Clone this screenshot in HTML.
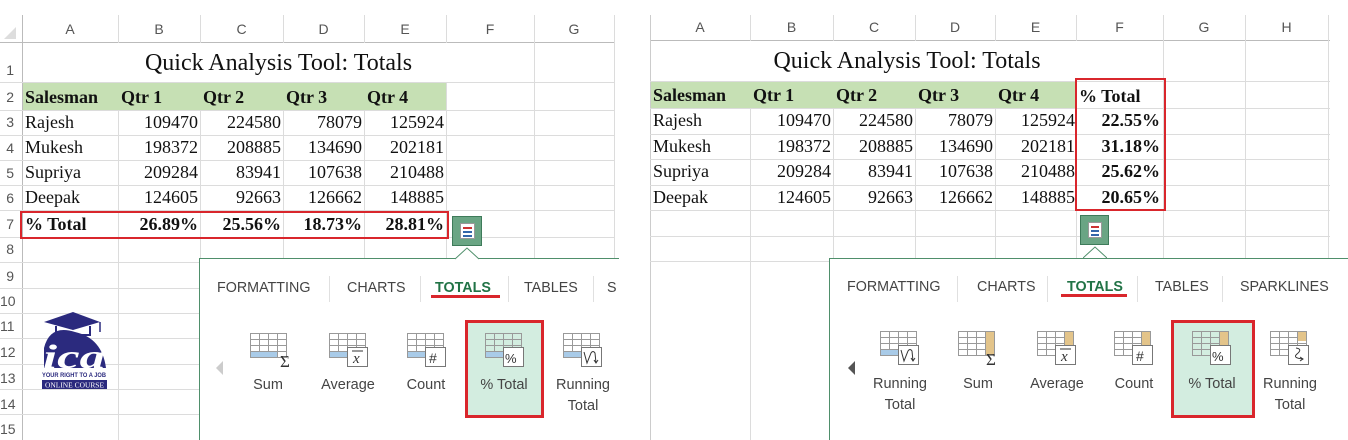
<!DOCTYPE html>
<html><head><meta charset="utf-8"><style>
*{margin:0;padding:0;box-sizing:border-box}
body{width:1348px;height:440px;background:#fff;position:relative;overflow:hidden;font-family:"Liberation Serif",serif}
.a{position:absolute}
.v{position:absolute;width:1px;background:#dcdcdc}
.h{position:absolute;height:1px;background:#dcdcdc}
.ch{position:absolute;font-family:"Liberation Sans",sans-serif;font-size:14px;color:#555;text-align:center;top:21px}
.rn{position:absolute;left:0;width:14px;font-family:"Liberation Sans",sans-serif;font-size:14px;color:#555;text-align:right}
.c{position:absolute;font-size:18px;color:#111;height:25px;line-height:25px;white-space:nowrap}
.r{text-align:right}
.b{font-weight:bold}
.tab{position:absolute;font-family:"Liberation Sans",sans-serif;font-size:14.3px;color:#444;top:280px}
.sep{position:absolute;width:1px;background:#e0e0e0;top:276px;height:26px}
.lbl{position:absolute;font-family:"Liberation Sans",sans-serif;font-size:14.5px;color:#444;text-align:center;width:80px;line-height:21px}
</style></head><body>

<!-- LEFT PANEL grid -->
<div class="h" style="left:0;top:42px;width:615px;background:#bbb"></div>
<div class="v" style="left:22px;top:15px;height:425px;background:#bbb"></div>
<div class="v" style="left:118px;top:15px;height:425px"></div>
<div class="v" style="left:200px;top:15px;height:425px"></div>
<div class="v" style="left:283px;top:15px;height:425px"></div>
<div class="v" style="left:364px;top:15px;height:425px"></div>
<div class="v" style="left:446px;top:15px;height:425px"></div>
<div class="v" style="left:534px;top:15px;height:425px"></div>
<div class="v" style="left:614px;top:15px;height:425px"></div>
<div class="h" style="left:0;top:82px;width:615px"></div>
<div class="h" style="left:0;top:110px;width:615px"></div>
<div class="h" style="left:0;top:135px;width:615px"></div>
<div class="h" style="left:0;top:160px;width:615px"></div>
<div class="h" style="left:0;top:185px;width:615px"></div>
<div class="h" style="left:0;top:210px;width:615px"></div>
<div class="h" style="left:0;top:237px;width:615px"></div>
<div class="h" style="left:0;top:262px;width:615px"></div>
<div class="h" style="left:0;top:288px;width:615px"></div>
<div class="h" style="left:0;top:313px;width:615px"></div>
<div class="h" style="left:0;top:338px;width:615px"></div>
<div class="h" style="left:0;top:364px;width:615px"></div>
<div class="h" style="left:0;top:389px;width:615px"></div>
<div class="h" style="left:0;top:414px;width:615px"></div>
<div class="a" style="left:4px;top:27px;width:0;height:0;border-left:12px solid transparent;border-bottom:12px solid #ddd"></div>
<div class="ch" style="left:22px;width:96px">A</div>
<div class="ch" style="left:118px;width:82px">B</div>
<div class="ch" style="left:200px;width:83px">C</div>
<div class="ch" style="left:283px;width:81px">D</div>
<div class="ch" style="left:364px;width:82px">E</div>
<div class="ch" style="left:446px;width:88px">F</div>
<div class="ch" style="left:534px;width:80px">G</div>
<div class="rn" style="top:62px">1</div>
<div class="rn" style="top:89px">2</div>
<div class="rn" style="top:114px">3</div>
<div class="rn" style="top:140px">4</div>
<div class="rn" style="top:165px">5</div>
<div class="rn" style="top:190px">6</div>
<div class="rn" style="top:216px">7</div>
<div class="rn" style="top:241px">8</div>
<div class="rn" style="top:268px">9</div>
<div class="rn" style="top:293px">10</div>
<div class="rn" style="top:318px">11</div>
<div class="rn" style="top:344px">12</div>
<div class="rn" style="top:370px">13</div>
<div class="rn" style="top:396px">14</div>
<div class="rn" style="top:421px">15</div>

<div class="a" style="left:23px;top:43px;width:511px;height:39px;background:#fff"></div>
<div class="c" style="left:23px;top:49px;width:511px;text-align:center;font-size:24px;height:28px;line-height:28px">Quick Analysis Tool: Totals</div>
<div class="a" style="left:23px;top:83px;width:423px;height:27px;background:#c6e0b4"></div>
<div class="c b" style="left:25px;top:85px">Salesman</div>
<div class="c b" style="left:121px;top:85px">Qtr 1</div>
<div class="c b" style="left:203px;top:85px">Qtr 2</div>
<div class="c b" style="left:286px;top:85px">Qtr 3</div>
<div class="c b" style="left:367px;top:85px">Qtr 4</div>

<div class="c" style="left:25px;top:110px">Rajesh</div>
<div class="c r" style="left:118px;width:80px;top:110px">109470</div>
<div class="c r" style="left:200px;width:81px;top:110px">224580</div>
<div class="c r" style="left:283px;width:79px;top:110px">78079</div>
<div class="c r" style="left:364px;width:80px;top:110px">125924</div>
<div class="c" style="left:25px;top:135px">Mukesh</div>
<div class="c r" style="left:118px;width:80px;top:135px">198372</div>
<div class="c r" style="left:200px;width:81px;top:135px">208885</div>
<div class="c r" style="left:283px;width:79px;top:135px">134690</div>
<div class="c r" style="left:364px;width:80px;top:135px">202181</div>
<div class="c" style="left:25px;top:160px">Supriya</div>
<div class="c r" style="left:118px;width:80px;top:160px">209284</div>
<div class="c r" style="left:200px;width:81px;top:160px">83941</div>
<div class="c r" style="left:283px;width:79px;top:160px">107638</div>
<div class="c r" style="left:364px;width:80px;top:160px">210488</div>
<div class="c" style="left:25px;top:185px">Deepak</div>
<div class="c r" style="left:118px;width:80px;top:185px">124605</div>
<div class="c r" style="left:200px;width:81px;top:185px">92663</div>
<div class="c r" style="left:283px;width:79px;top:185px">126662</div>
<div class="c r" style="left:364px;width:80px;top:185px">148885</div>
<div class="c b" style="left:25px;top:212px">% Total</div>
<div class="c b r" style="left:118px;width:80px;top:212px">26.89%</div>
<div class="c b r" style="left:200px;width:81px;top:212px">25.56%</div>
<div class="c b r" style="left:283px;width:79px;top:212px">18.73%</div>
<div class="c b r" style="left:364px;width:80px;top:212px">28.81%</div>
<div class="a" style="left:20px;top:211px;width:429px;height:28px;border:2px solid #d9262c"></div>

<!-- left QA button -->
<div class="a" style="left:452px;top:216px;width:30px;height:30px;background:#6aa584;border:1px solid #3e7b5a"></div>
<div class="a" style="left:460px;top:223px;width:15px;height:16px;background:#fff;border:1px solid #999"></div>
<div class="a" style="left:463px;top:227px;width:9px;height:2px;background:#c33"></div>
<div class="a" style="left:463px;top:231px;width:9px;height:2px;background:#36a"></div>
<div class="a" style="left:463px;top:235px;width:9px;height:2px;background:#36a"></div>

<!-- left popup -->
<div class="a" style="left:199px;top:258px;width:420px;height:182px;background:#fff;border-left:1px solid #4f8f6b;border-top:1px solid #4f8f6b"></div>
<svg class="a" style="left:455px;top:247px" width="24" height="13"><path d="M0 12 L12 1 L24 12" fill="#fff" stroke="#4f8f6b"/></svg>
<div class="tab" style="left:217px">FORMATTING</div>
<div class="sep" style="left:329px"></div>
<div class="tab" style="left:347px">CHARTS</div>
<div class="sep" style="left:420px"></div>
<div class="tab" style="left:435px;color:#217346;font-weight:bold">TOTALS</div>
<div class="a" style="left:431px;top:295px;width:69px;height:3px;background:#d9262c"></div>
<div class="sep" style="left:508px"></div>
<div class="tab" style="left:524px">TABLES</div>
<div class="sep" style="left:593px"></div>
<div class="tab" style="left:607px">S</div>
<svg class="a" style="left:216px;top:361px" width="8" height="14"><path d="M7 0 L0 7 L7 14Z" fill="#ccc"/></svg>
<div class="a" style="left:465px;top:320px;width:79px;height:98px;background:#d3ede0;border:3px solid #d9262c"></div>

<svg class="a" style="left:250px;top:333px" width="40" height="36"><g fill="none" stroke="#999" stroke-width="1"><rect x="0.5" y="0.5" width="36" height="24"/><path d="M0.5 6.5H36.5M0.5 12.5H36.5M0.5 18.5H36.5M9.5 0.5V24.5M18.5 0.5V24.5M27.5 0.5V24.5"/></g><rect x="1" y="19" width="26" height="5" fill="#a9cbe8"/><text x="30" y="34" font-family="Liberation Serif" font-size="17" fill="#333">Σ</text></svg>
<svg class="a" style="left:329px;top:333px" width="40" height="36"><g fill="none" stroke="#999"><rect x="0.5" y="0.5" width="36" height="24"/><path d="M0.5 6.5H36.5M0.5 12.5H36.5M0.5 18.5H36.5M9.5 0.5V24.5M18.5 0.5V24.5M27.5 0.5V24.5"/></g><rect x="1" y="19" width="17" height="5" fill="#a9cbe8"/><rect x="18.5" y="14.5" width="20" height="19" fill="#fff" stroke="#777"/><text x="24" y="30" font-family="Liberation Serif" font-style="italic" font-size="15" fill="#333">x</text><path d="M23 18H34" stroke="#333"/></svg>
<svg class="a" style="left:407px;top:333px" width="40" height="36"><g fill="none" stroke="#999"><rect x="0.5" y="0.5" width="36" height="24"/><path d="M0.5 6.5H36.5M0.5 12.5H36.5M0.5 18.5H36.5M9.5 0.5V24.5M18.5 0.5V24.5M27.5 0.5V24.5"/></g><rect x="1" y="19" width="17" height="5" fill="#a9cbe8"/><rect x="18.5" y="14.5" width="20" height="19" fill="#fff" stroke="#777"/><text x="22" y="30" font-family="Liberation Sans" font-size="14" fill="#333">#</text></svg>
<svg class="a" style="left:485px;top:333px" width="40" height="36"><g fill="none" stroke="#999"><rect x="0.5" y="0.5" width="36" height="24"/><path d="M0.5 6.5H36.5M0.5 12.5H36.5M0.5 18.5H36.5M9.5 0.5V24.5M18.5 0.5V24.5M27.5 0.5V24.5"/></g><rect x="1" y="19" width="17" height="5" fill="#a9cbe8"/><rect x="18.5" y="14.5" width="20" height="19" fill="#fff" stroke="#777"/><text x="20" y="30" font-family="Liberation Sans" font-size="13" fill="#333">%</text></svg>
<svg class="a" style="left:563px;top:333px" width="40" height="36"><g fill="none" stroke="#999"><rect x="0.5" y="0.5" width="36" height="24"/><path d="M0.5 6.5H36.5M0.5 12.5H36.5M0.5 18.5H36.5M9.5 0.5V24.5M18.5 0.5V24.5M27.5 0.5V24.5"/></g><rect x="1" y="19" width="17" height="5" fill="#a9cbe8"/><rect x="18.5" y="14.5" width="20" height="19" fill="#fff" stroke="#777"/><path d="M21 19 L24 30 L28 20 Q30 17 32 20 L33 30 M31 27 L33 30 L35 27" fill="none" stroke="#333"/></svg>
<div class="lbl" style="left:228px;top:375px">Sum</div>
<div class="lbl" style="left:308px;top:375px">Average</div>
<div class="lbl" style="left:386px;top:375px">Count</div>
<div class="lbl" style="left:464px;top:375px">% Total</div>
<div class="lbl" style="left:543px;top:375px">Running<br>Total</div>

<!-- ICA logo -->
<svg class="a" style="left:40px;top:310px" width="72" height="80">
<path d="M4 12 L33 2 L60 12 L33 20Z" fill="#2b2a7e"/>
<path d="M16 16 V25 H50 V16" fill="none" stroke="#2b2a7e" stroke-width="2"/>
<path d="M60 12 V22" stroke="#2b2a7e" stroke-width="1.5"/>
<path d="M4 58 V38 Q10 14 35 22 Q62 28 66 58Z" fill="#2b2a7e"/>
<text x="3" y="58" font-family="Liberation Serif" font-style="italic" font-weight="bold" font-size="34" fill="#fff" textLength="62" lengthAdjust="spacingAndGlyphs">ica</text>
<text x="2" y="67" font-family="Liberation Sans" font-weight="bold" font-size="6.5" fill="#2b2a7e" textLength="64" lengthAdjust="spacingAndGlyphs">YOUR RIGHT TO A JOB</text>
<rect x="2" y="70" width="65" height="9" fill="#2b2a7e"/>
<text x="5" y="77.5" font-family="Liberation Serif" font-size="7" fill="#fff" textLength="59" lengthAdjust="spacingAndGlyphs">ONLINE COURSE</text>
</svg>

<!-- RIGHT PANEL grid -->
<div class="h" style="left:650px;top:40px;width:680px;background:#bbb"></div>
<div class="v" style="left:650px;top:15px;height:425px;background:#ccc"></div>
<div class="v" style="left:750px;top:15px;height:425px"></div>
<div class="v" style="left:833px;top:15px;height:425px"></div>
<div class="v" style="left:915px;top:15px;height:425px"></div>
<div class="v" style="left:995px;top:15px;height:425px"></div>
<div class="v" style="left:1076px;top:15px;height:425px"></div>
<div class="v" style="left:1163px;top:15px;height:425px"></div>
<div class="v" style="left:1245px;top:15px;height:425px"></div>
<div class="v" style="left:1328px;top:15px;height:425px"></div>
<div class="h" style="left:650px;top:81px;width:680px"></div>
<div class="h" style="left:650px;top:108px;width:680px"></div>
<div class="h" style="left:650px;top:134px;width:680px"></div>
<div class="h" style="left:650px;top:159px;width:680px"></div>
<div class="h" style="left:650px;top:185px;width:680px"></div>
<div class="h" style="left:650px;top:210px;width:680px"></div>
<div class="h" style="left:650px;top:236px;width:680px"></div>
<div class="h" style="left:650px;top:261px;width:680px"></div>
<div class="ch" style="left:650px;width:100px;top:19px">A</div>
<div class="ch" style="left:750px;width:83px;top:19px">B</div>
<div class="ch" style="left:833px;width:82px;top:19px">C</div>
<div class="ch" style="left:915px;width:80px;top:19px">D</div>
<div class="ch" style="left:995px;width:81px;top:19px">E</div>
<div class="ch" style="left:1076px;width:87px;top:19px">F</div>
<div class="ch" style="left:1163px;width:82px;top:19px">G</div>
<div class="ch" style="left:1245px;width:83px;top:19px">H</div>

<div class="a" style="left:651px;top:41px;width:512px;height:40px;background:#fff"></div>
<div class="c" style="left:651px;top:47px;width:512px;text-align:center;font-size:24px;height:28px;line-height:28px">Quick Analysis Tool: Totals</div>
<div class="a" style="left:651px;top:82px;width:425px;height:26px;background:#c6e0b4"></div>
<div class="c b" style="left:653px;top:83px">Salesman</div>
<div class="c b" style="left:753px;top:83px">Qtr 1</div>
<div class="c b" style="left:836px;top:83px">Qtr 2</div>
<div class="c b" style="left:918px;top:83px">Qtr 3</div>
<div class="c b" style="left:998px;top:83px">Qtr 4</div>
<div class="c b" style="left:1079px;top:84px">% Total</div>

<div class="c" style="left:653px;top:108px">Rajesh</div>
<div class="c r" style="left:750px;width:81px;top:108px">109470</div>
<div class="c r" style="left:833px;width:80px;top:108px">224580</div>
<div class="c r" style="left:915px;width:78px;top:108px">78079</div>
<div class="c r" style="left:995px;width:80px;top:108px">125924</div>
<div class="c b r" style="left:1076px;width:84px;top:108px">22.55%</div>
<div class="c" style="left:653px;top:134px">Mukesh</div>
<div class="c r" style="left:750px;width:81px;top:134px">198372</div>
<div class="c r" style="left:833px;width:80px;top:134px">208885</div>
<div class="c r" style="left:915px;width:78px;top:134px">134690</div>
<div class="c r" style="left:995px;width:80px;top:134px">202181</div>
<div class="c b r" style="left:1076px;width:84px;top:134px">31.18%</div>
<div class="c" style="left:653px;top:159px">Supriya</div>
<div class="c r" style="left:750px;width:81px;top:159px">209284</div>
<div class="c r" style="left:833px;width:80px;top:159px">83941</div>
<div class="c r" style="left:915px;width:78px;top:159px">107638</div>
<div class="c r" style="left:995px;width:80px;top:159px">210488</div>
<div class="c b r" style="left:1076px;width:84px;top:159px">25.62%</div>
<div class="c" style="left:653px;top:185px">Deepak</div>
<div class="c r" style="left:750px;width:81px;top:185px">124605</div>
<div class="c r" style="left:833px;width:80px;top:185px">92663</div>
<div class="c r" style="left:915px;width:78px;top:185px">126662</div>
<div class="c r" style="left:995px;width:80px;top:185px">148885</div>
<div class="c b r" style="left:1076px;width:84px;top:185px">20.65%</div>
<div class="a" style="left:1075px;top:78px;width:91px;height:133px;border:2px solid #d9262c"></div>

<!-- right QA button -->
<div class="a" style="left:1080px;top:215px;width:29px;height:30px;background:#6aa584;border:1px solid #3e7b5a"></div>
<div class="a" style="left:1088px;top:222px;width:14px;height:16px;background:#fff;border:1px solid #999"></div>
<div class="a" style="left:1091px;top:226px;width:8px;height:2px;background:#c33"></div>
<div class="a" style="left:1091px;top:230px;width:8px;height:2px;background:#36a"></div>
<div class="a" style="left:1091px;top:234px;width:8px;height:2px;background:#36a"></div>

<!-- right popup -->
<div class="a" style="left:829px;top:258px;width:519px;height:182px;background:#fff;border-left:1px solid #4f8f6b;border-top:1px solid #4f8f6b"></div>
<svg class="a" style="left:1083px;top:246px" width="24" height="13"><path d="M0 12 L12 1 L24 12" fill="#fff" stroke="#4f8f6b"/></svg>
<div class="tab" style="left:847px;top:279px">FORMATTING</div>
<div class="sep" style="left:957px"></div>
<div class="tab" style="left:977px;top:279px">CHARTS</div>
<div class="sep" style="left:1047px"></div>
<div class="tab" style="left:1067px;top:279px;color:#217346;font-weight:bold">TOTALS</div>
<div class="a" style="left:1061px;top:294px;width:66px;height:3px;background:#d9262c"></div>
<div class="sep" style="left:1137px"></div>
<div class="tab" style="left:1155px;top:279px">TABLES</div>
<div class="sep" style="left:1222px"></div>
<div class="tab" style="left:1240px;top:279px">SPARKLINES</div>
<svg class="a" style="left:848px;top:361px" width="8" height="14"><path d="M7 0 L0 7 L7 14Z" fill="#555"/></svg>
<div class="a" style="left:1171px;top:320px;width:84px;height:98px;background:#d3ede0;border:3px solid #d9262c"></div>

<svg class="a" style="left:880px;top:331px" width="40" height="36"><g fill="none" stroke="#999"><rect x="0.5" y="0.5" width="36" height="24"/><path d="M0.5 6.5H36.5M0.5 12.5H36.5M0.5 18.5H36.5M9.5 0.5V24.5M18.5 0.5V24.5M27.5 0.5V24.5"/></g><rect x="1" y="19" width="17" height="5" fill="#a9cbe8"/><rect x="18.5" y="14.5" width="20" height="19" fill="#fff" stroke="#777"/><path d="M21 19 L24 30 L28 20 Q30 17 32 20 L33 30 M31 27 L33 30 L35 27" fill="none" stroke="#333"/></svg>
<svg class="a" style="left:958px;top:331px" width="40" height="36"><g fill="none" stroke="#999"><rect x="0.5" y="0.5" width="36" height="24"/><path d="M0.5 6.5H36.5M0.5 12.5H36.5M0.5 18.5H36.5M9.5 0.5V24.5M18.5 0.5V24.5M27.5 0.5V24.5"/></g><rect x="28" y="1" width="8" height="23" fill="#e3c48a"/><text x="28" y="34" font-family="Liberation Serif" font-size="17" fill="#333">Σ</text></svg>
<svg class="a" style="left:1037px;top:331px" width="40" height="36"><g fill="none" stroke="#999"><rect x="0.5" y="0.5" width="36" height="24"/><path d="M0.5 6.5H36.5M0.5 12.5H36.5M0.5 18.5H36.5M9.5 0.5V24.5M18.5 0.5V24.5M27.5 0.5V24.5"/></g><rect x="28" y="1" width="8" height="23" fill="#e3c48a"/><rect x="18.5" y="14.5" width="20" height="19" fill="#fff" stroke="#777"/><text x="24" y="30" font-family="Liberation Serif" font-style="italic" font-size="15" fill="#333">x</text><path d="M23 18H34" stroke="#333"/></svg>
<svg class="a" style="left:1114px;top:331px" width="40" height="36"><g fill="none" stroke="#999"><rect x="0.5" y="0.5" width="36" height="24"/><path d="M0.5 6.5H36.5M0.5 12.5H36.5M0.5 18.5H36.5M9.5 0.5V24.5M18.5 0.5V24.5M27.5 0.5V24.5"/></g><rect x="28" y="1" width="8" height="23" fill="#e3c48a"/><rect x="18.5" y="14.5" width="20" height="19" fill="#fff" stroke="#777"/><text x="22" y="30" font-family="Liberation Sans" font-size="14" fill="#333">#</text></svg>
<svg class="a" style="left:1192px;top:331px" width="40" height="36"><g fill="none" stroke="#999"><rect x="0.5" y="0.5" width="36" height="24"/><path d="M0.5 6.5H36.5M0.5 12.5H36.5M0.5 18.5H36.5M9.5 0.5V24.5M18.5 0.5V24.5M27.5 0.5V24.5"/></g><rect x="28" y="1" width="8" height="23" fill="#e3c48a"/><rect x="18.5" y="14.5" width="20" height="19" fill="#fff" stroke="#777"/><text x="20" y="30" font-family="Liberation Sans" font-size="13" fill="#333">%</text></svg>
<svg class="a" style="left:1270px;top:331px" width="40" height="36"><g fill="none" stroke="#999"><rect x="0.5" y="0.5" width="36" height="24"/><path d="M0.5 6.5H36.5M0.5 12.5H36.5M0.5 18.5H36.5M9.5 0.5V24.5M18.5 0.5V24.5M27.5 0.5V24.5"/></g><rect x="28" y="1" width="8" height="9" fill="#e3c48a"/><rect x="18.5" y="14.5" width="20" height="19" fill="#fff" stroke="#777"/><path d="M26 17 Q33 18 27 23 Q22 27 33 28 M30 26 L33 28 L30 30" fill="none" stroke="#333"/></svg>
<div class="lbl" style="left:860px;top:374px">Running<br>Total</div>
<div class="lbl" style="left:938px;top:374px">Sum</div>
<div class="lbl" style="left:1017px;top:374px">Average</div>
<div class="lbl" style="left:1094px;top:374px">Count</div>
<div class="lbl" style="left:1172px;top:374px">% Total</div>
<div class="lbl" style="left:1250px;top:374px">Running<br>Total</div>

</body></html>
